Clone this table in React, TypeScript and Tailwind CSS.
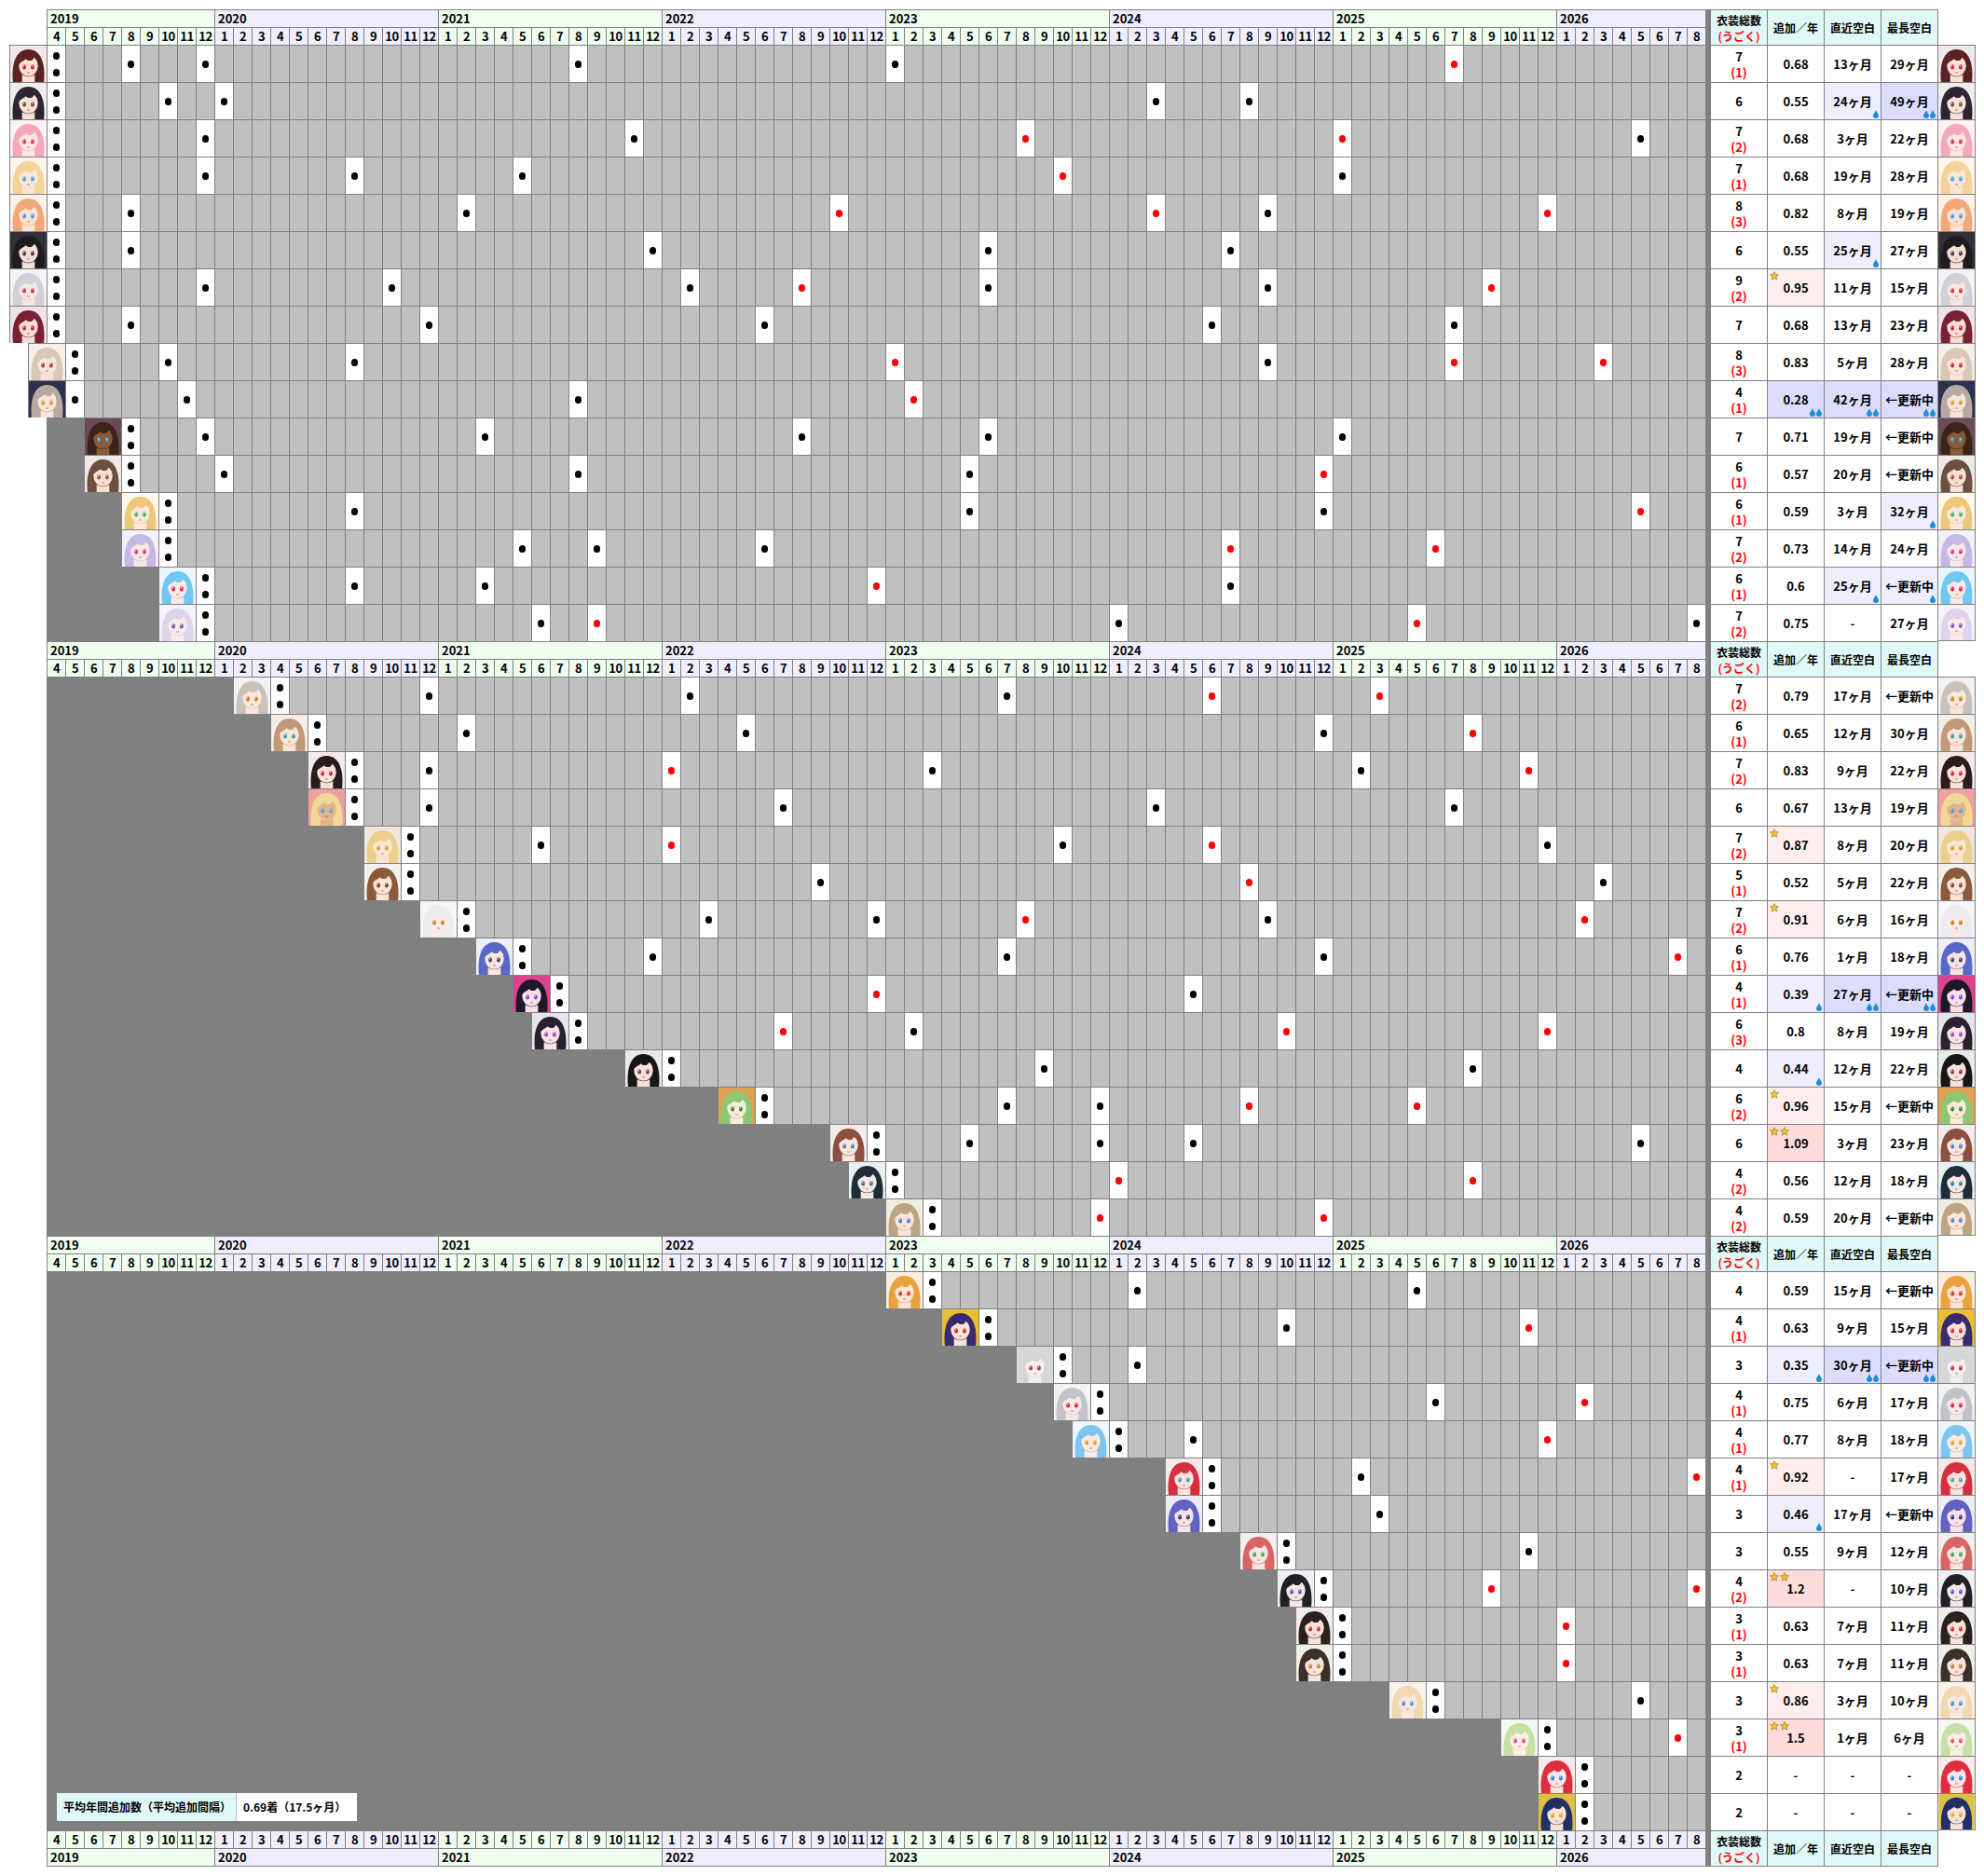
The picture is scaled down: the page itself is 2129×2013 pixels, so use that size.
import React from "react";

type FaceT = [string, string, string, string];
type Mark = "" | "s" | "ss" | "d" | "dd";

interface Row {
  s: string; // month of the first release (two dots unless `one`)
  one?: boolean;
  d: string[]; // later releases, "r" prefix = うごく (red)
  rate: string;
  rm?: Mark;
  recent: string;
  rd?: number;
  longest: string;
  ld?: number;
  f: FaceT;
}

const YEARS = [2019, 2020, 2021, 2022, 2023, 2024, 2025, 2026];

const monthsOf = (y: number) => {
  if (y === 2019) return [4, 5, 6, 7, 8, 9, 10, 11, 12];
  if (y === 2026) return [1, 2, 3, 4, 5, 6, 7, 8];
  return [1, 2, 3, 4, 5, 6, 7, 8, 9, 10, 11, 12];
};

const yearBg = (y: number) => (y % 2 === 1 ? "bg-[#eeffee]" : "bg-[#eeeeff]");
const yearW = (y: number) => (y === 2019 ? "w-[180px]" : y === 2026 ? "w-[160px]" : "w-[240px]");

// column index of "YYYY/M" (2019/4 = 0, 2026/8 = 88)
const col = (m: string) => {
  const [y, mo] = m.replace("r", "").split("/").map(Number);
  return (y - 2019) * 12 + mo - 4;
};

const SECTION1: Row[] = [
  { s: "2019/4", d: ["2019/8", "2019/12", "2021/8", "2023/1", "r2025/7"], rate: "0.68", recent: "13ヶ月", longest: "29ヶ月", f: ["#5a2222", "#fbe0d4", "#d02030", "#f0e8e8"] },
  { s: "2019/4", d: ["2019/10", "2020/1", "2024/3", "2024/8"], rate: "0.55", recent: "24ヶ月", rd: 1, longest: "49ヶ月", ld: 2, f: ["#2e2433", "#f8e2d6", "#6a4a3a", "#eeeeee"] },
  { s: "2019/4", d: ["2019/12", "2021/11", "r2023/8", "r2025/1", "2026/5"], rate: "0.68", recent: "3ヶ月", longest: "22ヶ月", f: ["#f4a8bc", "#fde6e0", "#d03050", "#fff0f4"] },
  { s: "2019/4", d: ["2019/12", "2020/8", "2021/5", "r2023/10", "2025/1"], rate: "0.68", recent: "19ヶ月", longest: "28ヶ月", f: ["#f2d49a", "#fbe6d6", "#40a0e0", "#fff4e8"] },
  { s: "2019/4", d: ["2019/8", "2021/2", "r2022/10", "r2024/3", "2024/9", "r2025/12"], rate: "0.82", recent: "8ヶ月", longest: "19ヶ月", f: ["#f2a878", "#fbe2d2", "#4a90e0", "#fff0e8"] },
  { s: "2019/4", d: ["2019/8", "2021/12", "2023/6", "2024/7"], rate: "0.55", recent: "25ヶ月", rd: 1, longest: "27ヶ月", f: ["#1c1c22", "#f6e0d6", "#403040", "#303038"] },
  { s: "2019/4", d: ["2019/12", "2020/10", "2022/2", "r2022/8", "2023/6", "2024/9", "r2025/9"], rate: "0.95", rm: "s", recent: "11ヶ月", longest: "15ヶ月", f: ["#cfd0d8", "#f8e6e0", "#c03040", "#f4f4f8"] },
  { s: "2019/4", d: ["2019/8", "2020/12", "2022/6", "2024/6", "2025/7"], rate: "0.68", recent: "13ヶ月", longest: "23ヶ月", f: ["#7a2032", "#f6dcd4", "#c02030", "#f0e4e8"] },
  { s: "2019/5", d: ["2019/10", "2020/8", "r2023/1", "2024/9", "r2025/7", "r2026/3"], rate: "0.83", recent: "5ヶ月", longest: "28ヶ月", f: ["#d8c8b6", "#fae4da", "#b03030", "#f6f0ea"] },
  { s: "2019/5", one: true, d: ["2019/11", "2021/8", "r2023/2"], rate: "0.28", rm: "dd", recent: "42ヶ月", rd: 2, longest: "←更新中", ld: 2, f: ["#b8aaa2", "#f6e4da", "#d0a020", "#2a3050"] },
  { s: "2019/8", d: ["2019/12", "2021/3", "2022/8", "2023/6", "2025/1"], rate: "0.71", recent: "19ヶ月", longest: "←更新中", f: ["#3a2418", "#8a5a3c", "#40a0d0", "#6a4a5a"] },
  { s: "2019/8", d: ["2020/1", "2021/8", "2023/5", "r2024/12"], rate: "0.57", recent: "20ヶ月", longest: "←更新中", f: ["#6a5040", "#f8e0d0", "#a05030", "#f0e8e4"] },
  { s: "2019/10", d: ["2020/8", "2023/5", "2024/12", "r2026/5"], rate: "0.59", recent: "3ヶ月", longest: "32ヶ月", ld: 1, f: ["#ecc878", "#fbe8d8", "#40b060", "#fff8ea"] },
  { s: "2019/10", d: ["2021/5", "2021/9", "2022/6", "r2024/7", "r2025/6"], rate: "0.73", recent: "14ヶ月", longest: "24ヶ月", f: ["#c6b8e6", "#fbe6e6", "#d03080", "#f4f0fa"] },
  { s: "2019/12", d: ["2020/8", "2021/3", "r2022/12", "2024/7"], rate: "0.6", recent: "25ヶ月", rd: 1, longest: "←更新中", ld: 1, f: ["#6ec8f2", "#fde8e4", "#d02060", "#eaf6fc"] },
  { s: "2019/12", d: ["2021/6", "r2021/9", "2024/1", "r2025/5", "2026/8"], rate: "0.75", recent: "-", longest: "27ヶ月", f: ["#dcd4ec", "#fbeae8", "#8050c0", "#f4f2fa"] },
];

const SECTION2: Row[] = [
  { s: "2020/4", d: ["2020/12", "2022/2", "2023/7", "r2024/6", "r2025/3"], rate: "0.79", recent: "17ヶ月", longest: "←更新中", f: ["#cac2ba", "#fae6dc", "#c08020", "#f4f2f0"] },
  { s: "2020/6", d: ["2021/2", "2022/5", "2024/12", "r2025/8"], rate: "0.65", recent: "12ヶ月", longest: "30ヶ月", f: ["#c09a78", "#fbe4d6", "#30a0a0", "#f4eee8"] },
  { s: "2020/8", d: ["2020/12", "r2022/1", "2023/3", "2025/2", "r2025/11"], rate: "0.83", recent: "9ヶ月", longest: "22ヶ月", f: ["#2a1c1c", "#fae2da", "#d02030", "#f6eaea"] },
  { s: "2020/8", d: ["2020/12", "2022/7", "2024/3", "2025/7"], rate: "0.67", recent: "13ヶ月", longest: "19ヶ月", f: ["#f2d896", "#e2b48c", "#4aa0e0", "#f0a0a0"] },
  { s: "2020/11", d: ["2021/6", "r2022/1", "2023/10", "r2024/6", "2025/12"], rate: "0.87", rm: "s", recent: "8ヶ月", longest: "20ヶ月", f: ["#ead08a", "#fbe6d6", "#d0a020", "#f0e8e0"] },
  { s: "2020/11", d: ["2022/9", "r2024/8", "2026/3"], rate: "0.52", recent: "5ヶ月", longest: "22ヶ月", f: ["#8a5a3a", "#fbe4d6", "#704030", "#f4f0ee"] },
  { s: "2021/2", d: ["2022/3", "2022/12", "r2023/8", "2024/9", "r2026/2"], rate: "0.91", rm: "s", recent: "6ヶ月", longest: "16ヶ月", f: ["#ececf2", "#fbeae4", "#c08020", "#f6f6fa"] },
  { s: "2021/5", d: ["2021/12", "2023/7", "2024/12", "r2026/7"], rate: "0.76", recent: "1ヶ月", longest: "18ヶ月", f: ["#5868c8", "#fae4de", "#304080", "#eceef8"] },
  { s: "2021/7", d: ["r2022/12", "2024/5"], rate: "0.39", rm: "d", recent: "27ヶ月", rd: 2, longest: "←更新中", ld: 2, f: ["#1e1828", "#f6e0e6", "#8040e0", "#e04090"] },
  { s: "2021/8", d: ["r2022/7", "2023/2", "r2024/10", "r2025/12"], rate: "0.8", recent: "8ヶ月", longest: "19ヶ月", f: ["#2a2030", "#f6e4e6", "#a040c0", "#e8e4ec"] },
  { s: "2022/1", d: ["2023/9", "2025/8"], rate: "0.44", rm: "d", recent: "12ヶ月", longest: "22ヶ月", f: ["#161618", "#f8e2da", "#903030", "#e8eaea"] },
  { s: "2022/6", d: ["2023/7", "2023/12", "r2024/8", "r2025/5"], rate: "0.96", rm: "s", recent: "15ヶ月", longest: "←更新中", f: ["#8cc874", "#fbecd8", "#308040", "#e0a050"] },
  { s: "2022/12", d: ["2023/5", "2023/12", "2024/5", "2026/5"], rate: "1.09", rm: "ss", recent: "3ヶ月", longest: "23ヶ月", f: ["#8a5040", "#fbe6dc", "#4080c0", "#f4ece8"] },
  { s: "2023/1", d: ["r2024/1", "r2025/8"], rate: "0.56", recent: "12ヶ月", longest: "18ヶ月", f: ["#1e2e38", "#f8e6e0", "#2080a0", "#e8f0f2"] },
  { s: "2023/3", d: ["r2023/12", "r2024/12"], rate: "0.59", recent: "20ヶ月", longest: "←更新中", f: ["#bca484", "#fbe6da", "#4080c0", "#f0ece4"] },
];

const SECTION3: Row[] = [
  { s: "2023/3", d: ["2024/2", "2025/5"], rate: "0.59", recent: "15ヶ月", longest: "←更新中", f: ["#eaa23e", "#fbe4d4", "#d03020", "#f8eee0"] },
  { s: "2023/6", d: ["2024/10", "r2025/11"], rate: "0.63", recent: "9ヶ月", longest: "15ヶ月", f: ["#3a2a72", "#f8e2da", "#d02030", "#e8c030"] },
  { s: "2023/10", d: ["2024/2"], rate: "0.35", rm: "d", recent: "30ヶ月", rd: 2, longest: "←更新中", ld: 2, f: ["#d6d6d6", "#f4eeee", "#c03050", "#d8d8d8"] },
  { s: "2023/12", d: ["2025/6", "r2026/2"], rate: "0.75", recent: "6ヶ月", longest: "17ヶ月", f: ["#c2c2ca", "#f6e8e8", "#d02030", "#f2f2f4"] },
  { s: "2024/1", d: ["2024/5", "r2025/12"], rate: "0.77", recent: "8ヶ月", longest: "18ヶ月", f: ["#7ec6f0", "#fbeae4", "#e0a020", "#eef6fc"] },
  { s: "2024/6", d: ["2025/2", "r2026/8"], rate: "0.92", rm: "s", recent: "-", longest: "17ヶ月", f: ["#d63040", "#fae4de", "#40a0a0", "#f4eaea"] },
  { s: "2024/6", d: ["2025/3"], rate: "0.46", rm: "d", recent: "17ヶ月", longest: "←更新中", f: ["#6262c2", "#f6e2e6", "#303080", "#ecebf6"] },
  { s: "2024/10", d: ["2025/11"], rate: "0.55", recent: "9ヶ月", longest: "12ヶ月", f: ["#d86464", "#fae4de", "#40a060", "#f4eeee"] },
  { s: "2024/12", d: ["r2025/9", "r2026/8"], rate: "1.2", rm: "ss", recent: "-", longest: "10ヶ月", f: ["#202028", "#f8e6e6", "#6050c0", "#f0f0f2"] },
  { s: "2025/1", d: ["r2026/1"], rate: "0.63", recent: "7ヶ月", longest: "11ヶ月", f: ["#2a201c", "#f6e2da", "#c03030", "#f0ecea"] },
  { s: "2025/1", d: ["r2026/1"], rate: "0.63", recent: "7ヶ月", longest: "11ヶ月", f: ["#3a3028", "#f8e4da", "#c08030", "#f2eee8"] },
  { s: "2025/6", d: ["2026/5"], rate: "0.86", rm: "s", recent: "3ヶ月", longest: "10ヶ月", f: ["#f0d8b0", "#fbe8de", "#4090d0", "#f8f2ea"] },
  { s: "2025/12", d: ["r2026/7"], rate: "1.5", rm: "ss", recent: "1ヶ月", longest: "6ヶ月", f: ["#c8e0a8", "#fbeee6", "#d05070", "#f4f8ee"] },
  { s: "2026/2", d: [], rate: "-", recent: "-", longest: "-", f: ["#e02c40", "#fbe6e2", "#3080d0", "#f6eaea"] },
  { s: "2026/2", d: [], rate: "-", recent: "-", longest: "-", f: ["#203064", "#f6e2d8", "#e0a020", "#e0c040"] },
];

function Face({ f }: { f: FaceT }) {
  const [hair, skin, eye, bg] = f;
  return (
    <svg viewBox="0 0 40 40" className="block h-full w-full">
      <rect width="40" height="40" fill={bg} />
      <path d="M3 40 C1 20 6 4 20 4 C34 4 39 20 37 40 Z" fill={hair} />
      <path d="M13 40 L13 32 Q20 36 27 32 L27 40 Z" fill={skin} />
      <ellipse cx="20" cy="22" rx="10.5" ry="11.5" fill={skin} />
      <path d="M8.5 21 C8 10 13 6.5 20 6.5 C27 6.5 32 10 31.5 21 C30 16 28 14 26 13 C25 17 20 17.5 17 14.5 C15.5 16.5 12 17.5 8.5 21 Z" fill={hair} />
      <ellipse cx="15.5" cy="23.5" rx="2" ry="2.7" fill={eye} />
      <ellipse cx="24.5" cy="23.5" rx="2" ry="2.7" fill={eye} />
      <circle cx="15" cy="22.5" r="0.7" fill="#ffffff" />
      <circle cx="24" cy="22.5" r="0.7" fill="#ffffff" />
      <path d="M18.6 29.5 Q20 30.4 21.4 29.5" stroke="#b05050" strokeWidth="0.8" fill="none" />
    </svg>
  );
}

function Star() {
  return (
    <svg viewBox="0 0 10 10" className="h-[10px] w-[10px]">
      <path d="M5 0.6 L6.3 3.6 L9.5 3.8 L7 5.9 L7.8 9.2 L5 7.4 L2.2 9.2 L3 5.9 L0.5 3.8 L3.7 3.6 Z" fill="#f6c42a" stroke="#9a7a20" strokeWidth="0.7" />
    </svg>
  );
}

function Drop() {
  return (
    <svg viewBox="0 0 6 9" className="h-[9px] w-[6px]">
      <path d="M3 0 C3.6 2.4 6 4.2 6 6 A3 3 0 0 1 0 6 C0 4.2 2.4 2.4 3 0 Z" fill="#1a8ed6" />
    </svg>
  );
}

function YearRow({ bottom }: { bottom?: boolean }) {
  return (
    <div className={bottom ? "flex h-5" : "flex h-[19px]"}>
      {YEARS.map((y) => (
        <div
          key={y}
          className={`${yearBg(y)} ${yearW(y)} border-l border-t border-[#808080] pl-[3px] text-[13px] font-bold leading-[18px] ${bottom ? "border-b" : ""}`}
        >
          {y}
        </div>
      ))}
    </div>
  );
}

function MonthRow() {
  return (
    <div className="flex h-[19px]">
      {YEARS.map((y) =>
        monthsOf(y).map((m) => (
          <div
            key={`${y}-${m}`}
            className={`${yearBg(y)} w-5 border-l border-t border-[#808080] text-center text-[13px] font-bold leading-[18px] tracking-[-0.5px]`}
          >
            {m}
          </div>
        ))
      )}
    </div>
  );
}

function StatHead({ footer }: { footer?: boolean }) {
  const base = `flex flex-col items-center justify-center border-l border-t border-[#808080] bg-[#e0f8f8] text-[12px] font-bold leading-[17px] ${footer ? "border-b" : ""}`;
  return (
    <>
      <div className={`${base} w-[61px]`}>
        <span>衣装総数</span>
        <span className="text-[#ff0000]">(うごく)</span>
      </div>
      <div className={`${base} w-[61px]`}>追加／年</div>
      <div className={`${base} w-[61px]`}>直近空白</div>
      <div className={`${base} w-[62px] border-r`}>最長空白</div>
    </>
  );
}

function Header({ footer }: { footer?: boolean }) {
  return (
    <div className="flex">
      <div className="w-10 shrink-0" />
      <div className="flex flex-col">
        {footer ? (
          <>
            <MonthRow />
            <YearRow bottom />
          </>
        ) : (
          <>
            <YearRow />
            <MonthRow />
          </>
        )}
      </div>
      <div className="w-[5px] shrink-0 bg-[#808080]" />
      <StatHead footer={footer} />
    </div>
  );
}

function Stat({
  children,
  w = "w-[61px]",
  stars = 0,
  drops = 0,
}: {
  children: React.ReactNode;
  w?: string;
  stars?: number;
  drops?: number;
}) {
  const bg =
    stars === 2 ? "bg-[#ffdcdc]" : stars === 1 ? "bg-[#ffeeee]" : drops === 2 ? "bg-[#dcdcff]" : drops === 1 ? "bg-[#eeeeff]" : "bg-white";
  return (
    <div className={`relative flex h-10 flex-col items-center justify-center border-l border-t border-[#808080] text-[13px] font-bold leading-[17px] ${w} ${bg}`}>
      {children}
      {stars > 0 && (
        <div className="absolute left-[2px] top-[2px] flex gap-[1px]">
          {Array.from({ length: stars }).map((_, i) => (
            <Star key={i} />
          ))}
        </div>
      )}
      {drops > 0 && (
        <div className="absolute bottom-[1px] right-[2px] flex gap-[1px]">
          {Array.from({ length: drops }).map((_, i) => (
            <Drop key={i} />
          ))}
        </div>
      )}
    </div>
  );
}

function Dot({ red }: { red?: boolean }) {
  return <div className={`h-[8px] w-[7px] rounded-full ${red ? "bg-[#ff0000]" : "bg-black"}`} />;
}

function DataRow({ row, last }: { row: Row; last: boolean }) {
  const s = col(row.s);
  const marks = new Map<number, string>();
  marks.set(s, row.one ? "1" : "2");
  row.d.forEach((m) => marks.set(col(m), m.startsWith("r") ? "r" : "b"));
  const total = (row.one ? 1 : 2) + row.d.length;
  const red = row.d.filter((m) => m.startsWith("r")).length;

  const cells = [];
  for (let c = s; c < 89; c++) {
    const mk = marks.get(c);
    cells.push(
      <div
        key={c}
        className={`h-10 w-5 shrink-0 border-l border-t border-[#808080] ${mk ? "bg-white" : "bg-[#c0c0c0]"}`}
      >
        {mk === "2" && (
          <div className="flex flex-col items-center gap-[10px] pt-[7px]">
            <Dot />
            <Dot />
          </div>
        )}
        {(mk === "1" || mk === "b" || mk === "r") && (
          <div className="flex h-full items-center justify-center">
            <Dot red={mk === "r"} />
          </div>
        )}
      </div>
    );
  }

  const stars = row.rm === "ss" ? 2 : row.rm === "s" ? 1 : 0;
  const drops = row.rm === "dd" ? 2 : row.rm === "d" ? 1 : 0;

  return (
    <div className="flex h-10">
      {s > 0 && <div className="shrink-0" style={{ width: Math.min(s, 2) * 20 }} />}
      {s > 2 && <div className="shrink-0 bg-[#808080]" style={{ width: (s - 2) * 20 }} />}
      <div className="h-10 w-10 shrink-0 overflow-hidden border-l border-t border-[#808080]">
        <Face f={row.f} />
      </div>
      {cells}
      <div className="w-[5px] shrink-0 bg-[#808080]" />
      <Stat>
        <span>{total}</span>
        {red > 0 && <span className="text-[#ff0000]">({red})</span>}
      </Stat>
      <Stat stars={stars} drops={drops}>
        {row.rate}
      </Stat>
      <Stat drops={row.rd ?? 0}>{row.recent}</Stat>
      <Stat w="w-[62px] border-r" drops={row.ld ?? 0}>
        {row.longest}
      </Stat>
      <div className={`h-10 w-10 shrink-0 overflow-hidden border-r border-t border-[#808080] ${last ? "border-b" : ""}`}>
        <Face f={row.f} />
      </div>
    </div>
  );
}

function Section({ rows }: { rows: Row[] }) {
  return (
    <>
      <Header />
      {rows.map((r, i) => (
        <DataRow key={i} row={r} last={i === rows.length - 1} />
      ))}
    </>
  );
}

export default function App() {
  return (
    <div className="relative min-h-[2013px] w-[2129px] bg-white pl-[10px] pt-[10px] font-['Noto_Sans_CJK_JP',sans-serif] text-black">
      <Section rows={SECTION1} />
      <Section rows={SECTION2} />
      <Section rows={SECTION3} />
      <Header footer />

      {/* average legend sits over the empty lower-left corner */}
      <div className="absolute left-[61px] top-[1924px] flex h-[30px] text-[12px] font-bold">
        <div className="flex w-[192px] items-center bg-[#e0f8f8] pl-[7px]">平均年間追加数（平均追加間隔）</div>
        <div className="flex w-[130px] items-center border-l border-[#c0c0c0] bg-white pl-[7px]">0.69着（17.5ヶ月）</div>
      </div>
    </div>
  );
}
